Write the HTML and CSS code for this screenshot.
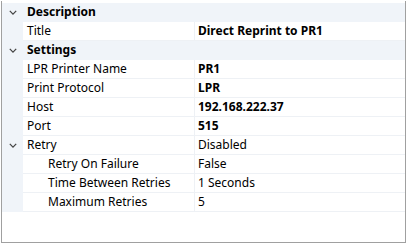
FILE: index.html
```html
<!DOCTYPE html>
<html lang="en">
<head>
  <meta charset="UTF-8" />
  <title>Properties</title>
  <link rel="stylesheet" href="styles.css">
</head>
<body>
  <div class="grid">
    <div class="row category">
      <div class="gutter"><svg class="chev" viewBox="0 0 10 6"><path d="M1 1 L5 5 L9 1" /></svg></div>
      <div class="name">Description</div>
    </div>
    <div class="row">
      <div class="gutter"></div>
      <div class="name">Title</div>
      <div class="value bold">Direct Reprint to PR1</div>
    </div>
    <div class="row category">
      <div class="gutter"><svg class="chev" viewBox="0 0 10 6"><path d="M1 1 L5 5 L9 1" /></svg></div>
      <div class="name">Settings</div>
    </div>
    <div class="row">
      <div class="gutter"></div>
      <div class="name">LPR Printer Name</div>
      <div class="value bold">PR1</div>
    </div>
    <div class="row">
      <div class="gutter"></div>
      <div class="name">Print Protocol</div>
      <div class="value bold">LPR</div>
    </div>
    <div class="row">
      <div class="gutter"></div>
      <div class="name">Host</div>
      <div class="value bold">192.168.222.37</div>
    </div>
    <div class="row">
      <div class="gutter"></div>
      <div class="name">Port</div>
      <div class="value bold">515</div>
    </div>
    <div class="row">
      <div class="gutter"><svg class="chev" viewBox="0 0 10 6"><path d="M1 1 L5 5 L9 1" /></svg></div>
      <div class="name">Retry</div>
      <div class="value">Disabled</div>
    </div>
    <div class="row">
      <div class="gutter"></div>
      <div class="name sub">Retry On Failure</div>
      <div class="value">False</div>
    </div>
    <div class="row">
      <div class="gutter"></div>
      <div class="name sub">Time Between Retries</div>
      <div class="value">1 Seconds</div>
    </div>
    <div class="row">
      <div class="gutter"></div>
      <div class="name sub">Maximum Retries</div>
      <div class="value">5</div>
    </div>
  </div>
</body>
</html>
```

FILE: styles.css
```css
body {
  margin: 0;
  padding: 1px 0 0 1px;
  background: #ffffff;
  font-family: "Noto Sans", Arial, sans-serif;
  font-size: 12px;
  color: #000;
}
.grid {
  width: 403px;
  height: 239px;
  padding-top: 2px;
  border: 1px solid #a0a0a0;
  border-top: none;
  background: #ffffff;
  display: flex;
  flex-direction: column;
}
.row {
  display: grid;
  grid-template-columns: 21px 172px 1fr;
  height: 19px;
  flex: none;
}
.gutter {
  background: #f0f4f9;
  display: flex;
  align-items: center;
  justify-content: center;
}
.chev {
  width: 8px;
  height: 5px;
  fill: none;
  stroke: #444;
  stroke-width: 1.6;
}
.name,
.value {
  border-bottom: 1px solid #eef1f5;
  line-height: 18px;
  white-space: nowrap;
  overflow: hidden;
}
.name {
  padding-left: 4px;
  border-right: 1px solid #eef1f5;
}
.name.sub {
  padding-left: 25px;
}
.value {
  padding-left: 3px;
}
.bold {
  font-weight: bold;
}
.category {
  background: #f0f4f9;
}
.category .name {
  grid-column: 2 / 4;
  border: none;
  font-weight: bold;
}
```
